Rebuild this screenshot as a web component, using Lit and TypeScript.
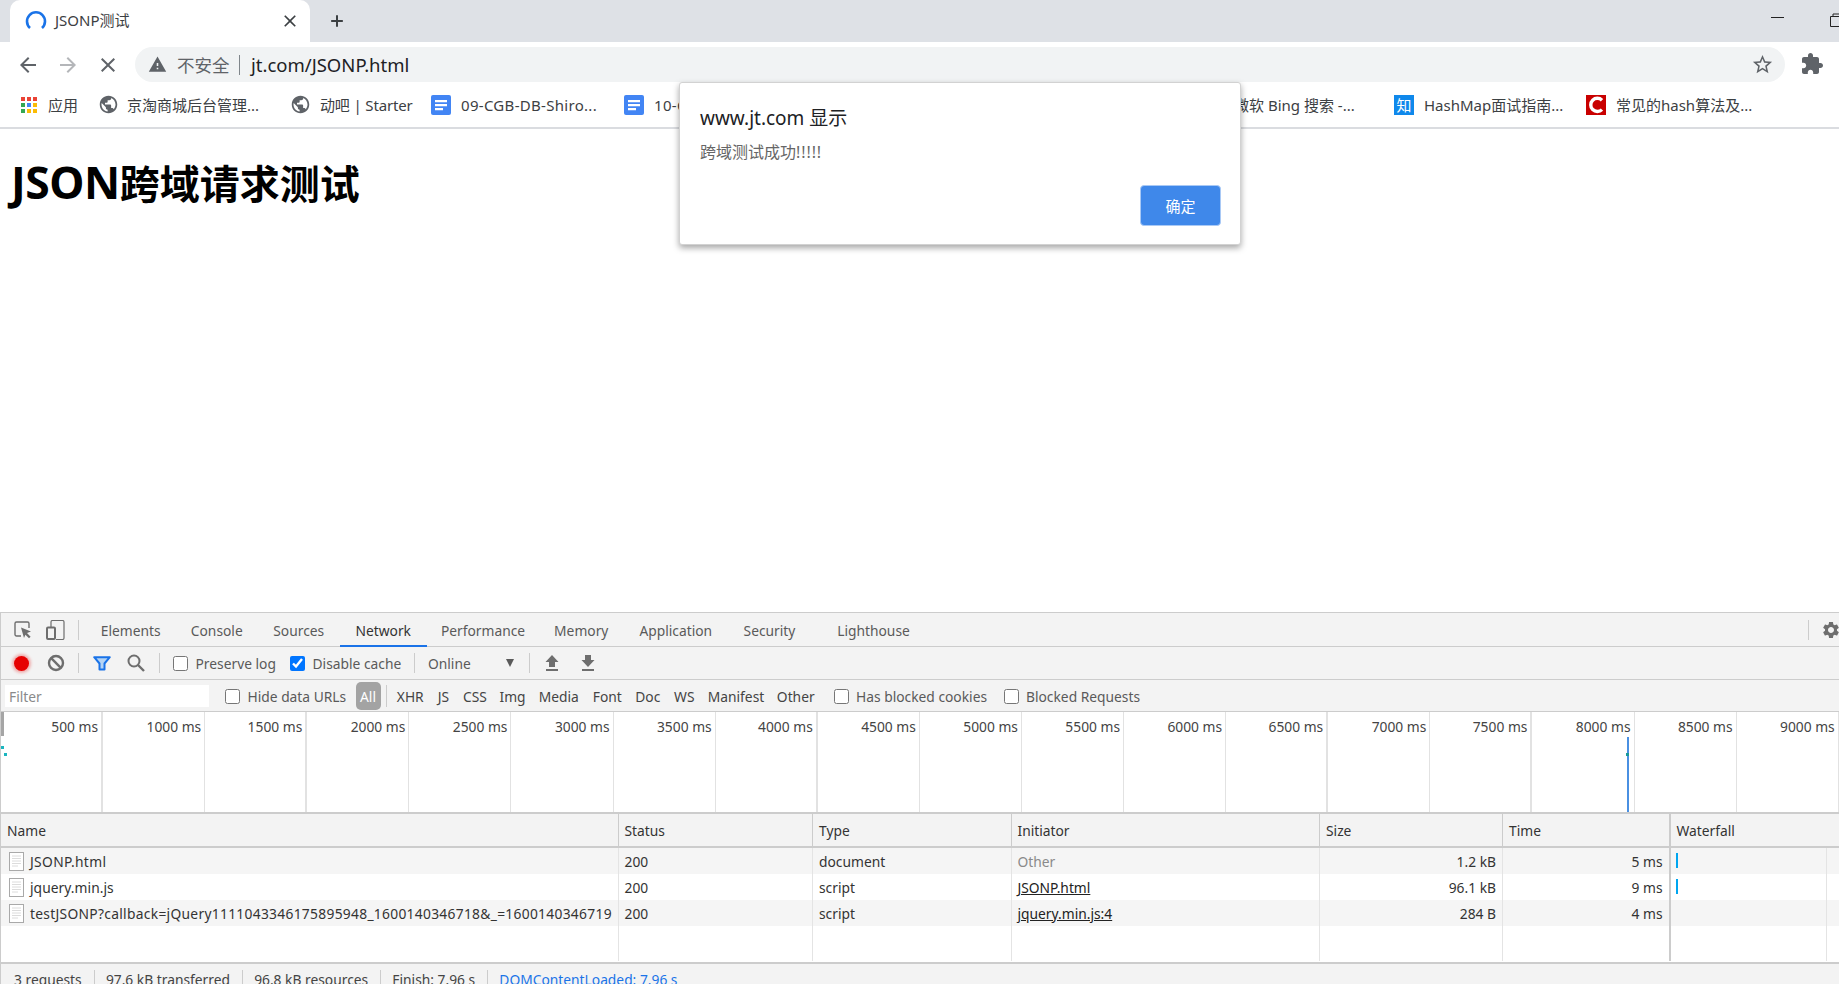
import { LitElement, html, css, svg } from "lit";
import { customElement } from "lit/decorators.js";

const ic = (d: string, cls = "") => html`<svg class="ic ${cls}" viewBox="0 0 24 24"><path d="${d}"></path></svg>`;
const P = {
  back: "M20 11H7.83l5.59-5.59L12 4l-8 8 8 8 1.41-1.41L7.83 13H20v-2z",
  fwd: "M12 4l-1.41 1.41L16.17 11H4v2h12.17l-5.58 5.59L12 20l8-8z",
  close: "M19 6.41L17.59 5 12 10.59 6.41 5 5 6.41 10.59 12 5 17.59 6.41 19 12 13.41 17.59 19 19 17.59 13.41 12z",
  warn: "M1 21h22L12 2 1 21zm12-3h-2v-2h2v2zm0-4h-2v-4h2v4z",
  star: "M22 9.24l-7.19-.62L12 2 9.19 8.63 2 9.24l5.46 4.73L5.82 21 12 17.27 18.18 21l-1.63-7.03L22 9.24zM12 15.4l-3.76 2.27 1-4.28-3.32-2.88 4.38-.38L12 6.1l1.71 4.04 4.38.38-3.32 2.88 1 4.28L12 15.4z",
  ext: "M20.5 11H19V7c0-1.1-.9-2-2-2h-4V3.5C13 2.12 11.88 1 10.5 1S8 2.12 8 3.5V5H4c-1.1 0-1.99.9-1.99 2v3.8H3.5c1.49 0 2.7 1.21 2.7 2.7s-1.21 2.7-2.7 2.7H2V20c0 1.1.9 2 2 2h3.8v-1.5c0-1.49 1.21-2.7 2.7-2.7 1.49 0 2.7 1.21 2.7 2.7V22H17c1.1 0 2-.9 2-2v-4h1.5c1.38 0 2.5-1.12 2.5-2.5S21.88 11 20.5 11z",
  globe: "M12 2C6.48 2 2 6.48 2 12s4.48 10 10 10 10-4.48 10-10S17.52 2 12 2zm-1 17.93c-3.95-.49-7-3.85-7-7.93 0-.62.08-1.21.21-1.79L9 15v1c0 1.1.9 2 2 2v1.93zm6.9-2.54c-.26-.81-1-1.39-1.9-1.39h-1v-3c0-.55-.45-1-1-1H8v-2h2c.55 0 1-.45 1-1V7h2c1.1 0 2-.9 2-2v-.41c2.93 1.19 5 4.06 5 7.41 0 2.08-.8 3.97-2.1 5.39z",
  gear: "M19.14 12.94c.04-.3.06-.61.06-.94 0-.32-.02-.64-.07-.94l2.03-1.58c.18-.14.23-.41.12-.61l-1.92-3.32c-.12-.22-.37-.29-.59-.22l-2.39.96c-.5-.38-1.03-.7-1.62-.94l-.36-2.54c-.04-.24-.24-.41-.48-.41h-3.84c-.24 0-.43.17-.47.41l-.36 2.54c-.59.24-1.13.57-1.62.94l-2.39-.96c-.22-.08-.47 0-.59.22L2.74 8.87c-.12.21-.08.47.12.61l2.03 1.58c-.05.3-.09.63-.09.94s.02.64.07.94l-2.03 1.58c-.18.14-.23.41-.12.61l1.92 3.32c.12.22.37.29.59.22l2.39-.96c.5.38 1.03.7 1.62.94l.36 2.54c.05.24.24.41.48.41h3.84c.24 0 .44-.17.47-.41l.36-2.54c.59-.24 1.13-.56 1.62-.94l2.39.96c.22.08.47 0 .59-.22l1.92-3.32c.12-.22.07-.47-.12-.61l-2.01-1.58zM12 15.6c-1.98 0-3.6-1.62-3.6-3.6s1.62-3.6 3.6-3.6 3.6 1.62 3.6 3.6-1.62 3.6-3.6 3.6z",
};

const appsColors = ["#ea4335", "#ea4335", "#ea4335", "#34a853", "#4285f4", "#fbbc05", "#34a853", "#fbbc05", "#fbbc05"];
const appsIcon = html`<svg class="apps" viewBox="0 0 16 16">
  ${appsColors.map((c, i) => svg`<rect x="${(i % 3) * 6}" y="${Math.floor(i / 3) * 6}" width="4" height="4" fill="${c}"></rect>`)}
</svg>`;
const docIcon = html`<svg class="bm-svg" viewBox="0 0 20 20"><rect x="0" y="0" width="20" height="20" rx="2" fill="#4285f4"></rect><path d="M4 5h12v2.2H4zM4 9h12v2.2H4zM4 13h8v2.2H4z" fill="#fff"></path></svg>`;
const zhihuIcon = html`<div class="zhihu">知</div>`;
const cIcon = html`<svg class="bm-svg" viewBox="0 0 20 20"><rect width="20" height="20" fill="#c90000"></rect><path d="M16 5.2A6.6 6.6 0 1 0 16 14.6" fill="none" stroke="#fff" stroke-width="3.4"></path></svg>`;

const bookmarks = [
  { w: 79, after: 0, gap: 11, ls: 0, icon: appsIcon, text: "应用" },
  { w: 192, after: 0, gap: 8, ls: 0, icon: ic(P.globe, "globe"), text: "京淘商城后台管理..." },
  { w: 140, after: 0, gap: 9, ls: -0.15, icon: ic(P.globe, "globe"), text: "动吧 | Starter" },
  { w: 193, after: 0, gap: 10, ls: 0.3, icon: docIcon, text: "09-CGB-DB-Shiro..." },
  { w: 56, after: 524, gap: 10, ls: 0.3, icon: docIcon, text: "10-CGB-DB-Redis..." },
  { w: 190, after: 0, gap: 10, ls: 0, icon: ic(P.globe, "globe"), text: "微软 Bing 搜索 -..." },
  { w: 192, after: 0, gap: 10, ls: 0, icon: zhihuIcon, text: "HashMap面试指南..." },
  { w: 200, after: 0, gap: 10, ls: 0, icon: cIcon, text: "常见的hash算法及..." },
];

const tabs = [
  ["Elements", 89.5], ["Console", 82.5], ["Sources", 81.5], ["Network", 87.5], ["Performance", 112],
  ["Memory", 84.5], ["Application", 104.5], ["Security", 83], ["Lighthouse", 125],
] as [string, number][];

const types = [
  ["XHR", 40.5], ["JS", 26], ["CSS", 37], ["Img", 38], ["Media", 54.5], ["Font", 42.5],
  ["Doc", 38.5], ["WS", 34.5], ["Manifest", 69], ["Other", 50.5],
] as [string, number][];

const ticks = Array.from({ length: 18 }, (_, i) => (i + 1) * 500);
const wideTicks = new Set([500, 1500, 4000, 6500, 7500]);

const cols = ["Status", "Type", "Initiator", "Size", "Time"];
const rows = [
  { name: "JSONP.html", ls: 0.35, type: "document", init: "Other", size: "1.2 kB", time: "5 ms", bar: true },
  { name: "jquery.min.js", ls: 0.05, type: "script", init: "JSONP.html", link: true, size: "96.1 kB", time: "9 ms", bar: true },
  { name: "testJSONP?callback=jQuery1111043346175895948_1600140346718&_=1600140346719", ls: 0.3, type: "script", init: "jquery.min.js:4", link: true, size: "284 B", time: "4 ms", bar: false },
] as any[];

const fileIcon = html`<svg class="file" viewBox="0 0 15 19"><rect x=".5" y=".5" width="14" height="18" fill="#fff" stroke="#a9a9a9"></rect><path d="M3 4h9M3 6.5h9M3 9h9M3 11.5h9M3 14h6" stroke="#dcdcdc" fill="none"></path></svg>`;

@customElement("app-root")
export class AppRoot extends LitElement {
  static styles = css`
    :host { display: block; position: relative; width: 1839px; height: 984px; overflow: hidden; background: #fff;
      font-family: "Noto Sans", "Noto Sans CJK SC", sans-serif; color: #333; }
    .ic { width: 24px; height: 24px; fill: #5f6368; display: block; flex: none; }

    .strip { height: 42px; background: #dee1e6; display: flex; align-items: center; padding-left: 10px; box-sizing: border-box; position: relative; }
    .tab { width: 300px; height: 42px; background: #fff; border-radius: 10px 10px 0 0; box-sizing: border-box; display: flex; align-items: center; padding-left: 15px; flex: none; }
    .spin { width: 22px; height: 22px; flex: none; }
    .tab-title { font-size: 15px; line-height: 20px; color: #3c4043; margin: -2px 0 0 8px; width: 225px; white-space: nowrap; }
    .tab .ic { width: 20px; height: 20px; fill: #3c4043; }
    .plus { margin-left: 17px; width: 20px; height: 20px; fill: #3c4043; flex: none; }
    .winbtns { margin-left: auto; display: flex; align-items: flex-start; align-self: flex-start; padding-top: 13px; }
    .min { width: 13px; height: 1px; background: #222; margin: 4px 0 0 0; }
    .restore { width: 14px; height: 14px; margin-left: 46px; flex: none; margin-right: -5px; }

    .toolbar { height: 40px; display: flex; align-items: flex-start; padding: 5px 0 0 8px; box-sizing: border-box; }
    .nav { height: 35px; display: flex; align-items: center; justify-content: center; flex: none; }
    .nav .ic { fill: #5f6368; width: 24px; height: 24px; }
    .nav .fwd { fill: #b4b6b9; }
    .n40 { width: 40px; } .n39 { width: 39px; } .n41 { width: 41px; }
    .omni { margin-left: 7px; width: 1650px; height: 35px; border-radius: 18px; background: #f1f3f4; display: flex; align-items: center; padding-left: 13px; box-sizing: border-box; flex: none; }
    .omni .warn { width: 19px; height: 19px; fill: #5f6368; }
    .insecure { font-size: 17.5px; color: #5f6368; margin-left: 10px; }
    .pipe { width: 1.5px; height: 20px; background: #80868b; margin: 0 11px 0 9px; }
    .url { font-size: 18.5px; color: #202124; flex: 1; white-space: nowrap; }
    .omni .star { width: 23px; height: 23px; margin-right: 11px; }
    .ext { margin-left: 15px; width: 24px; height: 24px; margin-top: 5px; }

    .bars { height: 47px; border-bottom: 2px solid #dadce0; box-sizing: border-box; display: flex; align-items: center; padding-left: 20px; }
    .bm { display: flex; align-items: center; flex: none; overflow: hidden; white-space: nowrap; font-size: 15px; color: #3c4043; }
    .apps { width: 16px; height: 16px; flex: none; margin-left: 1px; }
    .bm-svg { width: 20px; height: 20px; flex: none; }
    .globe { width: 21px; height: 21px; margin-left: -1px; }
    .zhihu { width: 20px; height: 20px; flex: none; background: #0f88eb; color: #fff; font-size: 15px; line-height: 20px; text-align: center; }

    .page { height: 483px; box-sizing: border-box; padding: 28px 0 0 11px; }
    h1 { margin: 0; font-size: 40px; line-height: 50px; font-weight: 700; color: #000; }
    .latin { font-size: 44.5px; letter-spacing: -0.5px; line-height: 50px; }

    .dialog { position: absolute; left: 679px; top: 82px; width: 562px; height: 163px; box-sizing: border-box; background: #fff; border-radius: 3px; border: 1px solid #d2d2d2; box-shadow: 0 3px 6px rgba(0,0,0,.35); padding: 22px 19px 18px 20px; display: flex; flex-direction: column; }
    .d-title { font-size: 19px; line-height: 26px; color: #202124; }
    .d-msg { font-size: 16px; line-height: 20px; color: #666; margin-top: 11px; }
    .bang { letter-spacing: 0.9px; }
    .d-btn { margin-top: auto; align-self: flex-end; width: 81px; height: 41px; background: #3f88ea; color: #fff; border-radius: 4px; border: 1px solid #a9c9f5; box-sizing: border-box; font-size: 15px; display: flex; align-items: center; justify-content: center; }

    .devtools { height: 372px; box-sizing: border-box; border-top: 1px solid #ccc; border-left: 1px solid #ccc; font-size: 13.8px; background: #f3f3f3; position: relative; overflow: hidden; }
    .dt-tabs { height: 34px; display: flex; border-bottom: 1px solid #ccc; box-sizing: border-box; }
    .dt-icon { flex: none; display: flex; align-items: center; justify-content: center; }
    .i1 { width: 43px; } .i2 { width: 22px; }
    .dt-sep { flex: none; width: 1px; height: 20px; background: #ccc; align-self: center; }
    .tabs-sep { margin: 0 7px 0 12px; }
    .tabcell { flex: none; display: flex; align-items: center; justify-content: center; box-sizing: border-box; color: #5a5a5a; white-space: nowrap; height: 34px; }
    .tabcell.on { color: #333; border-bottom: 2px solid #1a73e8; padding-top: 2px; }
    .settings { margin-left: auto; display: flex; align-items: center; }
    .settings .ic { fill: #6e6e6e; width: 20px; height: 20px; margin: 0 -2px 0 12px; }

    .tb2 { height: 33px; border-bottom: 1px solid #ccc; box-sizing: border-box; display: grid; align-items: center; justify-items: center;
      grid-template-columns: 3px 34px 36px 8px 39px 30px 16px 6px 117px 120px 8px 10px 94px 14px 32px 40px; }
    .tb2 > label { justify-self: start; }
    .rec { width: 15px; height: 15px; border-radius: 50%; background: #e60000; box-shadow: 0 0 3px 2px rgba(230,0,0,.3); }
    .filter-ic { width: 18px; height: 15px; }
    label { display: flex; align-items: center; gap: 7.5px; color: #5a5a5a; white-space: nowrap; }
    input[type="checkbox"] { width: 15px; height: 15px; margin: 0; accent-color: #0075ff; flex: none; }
    .select { width: 100%; display: flex; justify-content: space-between; align-items: center; color: #5a5a5a; padding-right: 8px; box-sizing: border-box; }
    .tri { width: 0; height: 0; border-left: 4px solid transparent; border-right: 4px solid transparent; border-top: 8px solid #5a5a5a; }

    .tb3 { height: 32px; box-sizing: border-box; border-bottom: 1px solid #ccc; display: flex; align-items: center; padding: 1px 0 0 4px; }
    .filter { width: 204px; height: 22px; background: #fff; color: #8a8a8a; padding-left: 4px; box-sizing: border-box; display: flex; align-items: center; flex: none; margin-right: 16px; }
    .tb3 label { flex: none; }
    .hide { width: 130.5px; }
    .all { width: 25px; height: 28px; flex: none; background: #a3a3a3; color: #fff; border-radius: 5px; display: flex; align-items: center; justify-content: center; }
    .tb3 .dt-sep { margin: 0 3.5px 0 5px; height: 22px; }
    .type { flex: none; text-align: center; color: #444; white-space: nowrap; }
    .hbc { margin-left: 12.5px; width: 170px; }

    .overview { height: 100px; background: #fff; display: flex; position: relative; }
    .tick { flex: none; width: 102.1px; box-sizing: border-box; border-right: 1px solid #e2e2e2; text-align: right; padding: 5px 3px 0 0; line-height: 20px; color: #444; white-space: nowrap; }
    .tick.wide { border-right: 2px solid #e2e2e2; }
    .thumb { position: absolute; left: 0; top: 0; width: 3px; height: 24px; background: #a5a5a5; }
    .dot { position: absolute; width: 3px; height: 3px; background: #1ab5bf; }
    .d1 { left: 0; top: 34px; } .d2 { left: 3px; top: 41px; }
    .line { position: absolute; left: 1625.5px; top: 25px; bottom: 0; width: 2px; background: #4a90e2; }
    .d3 { left: 1625px; top: 41px; background: #1a9a9a; }

    .r { display: grid; grid-template-columns: 617.5px 194.5px 198.5px 308.5px 183px 167.5px 156px 1fr; }
    .head { border-top: 2px solid #ccc; border-bottom: 2px solid #ccc; height: 32px; color: #333; }
    .head > div { display: flex; align-items: center; padding-left: 6px; box-sizing: border-box; border-right: 1px solid #ccc; white-space: nowrap; }
    .head > div.wf { grid-column: span 2; border-right: none; }
    .head > div.wide-b { border-right: 2px solid #ccc; }
    .row { height: 26px; background: #fff; color: #333; }
    .row.odd { background: #f5f5f5; }
    .row > div { display: flex; align-items: center; padding: 0 6px; box-sizing: border-box; border-right: 1px solid #e4e4e4; white-space: nowrap; overflow: hidden; position: relative; }
    .row > div.num { justify-content: flex-end; }
    .row > div.wb { border-right: 2px solid #ccc; }
    .row > div.last { border-right: none; }
    .row > div.nm { padding-left: 8px; gap: 6px; }
    .file { width: 15px; height: 19px; flex: none; }
    .muted { color: #8a8a8a; }
    .link { text-decoration: underline; color: #222; }
    .bar { position: absolute; left: 5px; top: 5px; width: 2.5px; height: 15px; background: #00a6f0; }
    .blank { height: 36px; background: #fff; }
    .blank > div { border-right: 1px solid #e4e4e4; box-sizing: border-box; margin-bottom: 1px; }
    .blank > div.wb { border-right: 2px solid #ccc; }
    .blank > div.last { border-right: none; }
    .foot { border-top: 2px solid #ccc; height: 30px; display: flex; }
    .foot > div { padding: 0 11.9px 0 11.3px; border-right: 1px solid #ccc; height: 16px; margin-top: 6px; line-height: 20px; white-space: nowrap; flex: none; color: #444; }
    .foot > div:first-child { padding-left: 13px; }
    .foot > div:last-child { border-right: none; color: #1a73e8; }
  `;

  render() {
    return html`
      <div class="strip">
        <div class="tab">
          <svg class="spin" viewBox="0 0 22 22"><path d="M5 18A9 9 0 1 1 17 18" fill="none" stroke="#1a73e8" stroke-width="2.6"></path></svg>
          <div class="tab-title">JSONP测试</div>
          ${ic(P.close)}
        </div>
        <svg class="plus" viewBox="0 0 24 24"><path d="M19 13.2h-5.8V19h-2.4v-5.8H5v-2.4h5.8V5h2.4v5.8H19z"></path></svg>
        <div class="winbtns">
          <div class="min"></div>
          <svg class="restore" viewBox="0 0 14 14"><path d="M3 3V1h10v9h-2M.5 3.5h10v10H.5z" fill="none" stroke="#222"></path></svg>
        </div>
      </div>
      <div class="toolbar">
        <div class="nav n40">${ic(P.back)}</div>
        <div class="nav n39">${ic(P.fwd, "fwd")}</div>
        <div class="nav n41">${ic(P.close)}</div>
        <div class="omni">
          ${ic(P.warn, "warn")}
          <span class="insecure">不安全</span><span class="pipe"></span>
          <span class="url">jt.com/JSONP.html</span>
          ${ic(P.star, "star")}
        </div>
        ${ic(P.ext, "ext")}
      </div>
      <div class="bars">
        ${bookmarks.map((b) => html`<div class="bm" style="width:${b.w}px;gap:${b.gap}px;margin-right:${b.after}px;letter-spacing:${b.ls}px">${b.icon}<span>${b.text}</span></div>`)}
      </div>
      <div class="page"><h1><span class="latin">JSON</span>跨域请求测试</h1></div>

      <div class="devtools">
        <div class="dt-tabs">
          <div class="dt-icon i1">
            <svg width="18" height="18" viewBox="0 0 18 18"><path d="M7 15H2.5A1.5 1.5 0 0 1 1 13.5v-11A1.5 1.5 0 0 1 2.5 1h11A1.5 1.5 0 0 1 15 2.5V7" fill="none" stroke="#6e6e6e" stroke-width="1.4"></path><path d="M7 6.5l10 4-4 1.6 3.6 3.6-1.6 1.6-3.6-3.6L10 17z" fill="#6e6e6e"></path></svg>
          </div>
          <div class="dt-icon i2">
            <svg width="19" height="20" viewBox="0 0 19 20"><path d="M5 7V2a1.5 1.5 0 0 1 1.5-1.5h10A1.5 1.5 0 0 1 18 2v16a1.5 1.5 0 0 1-1.5 1.5H10" fill="none" stroke="#6e6e6e" stroke-width="1.2"></path><rect x="1" y="7.5" width="8" height="11.5" rx="1" fill="none" stroke="#6e6e6e" stroke-width="2"></rect></svg>
          </div>
          <div class="dt-sep tabs-sep"></div>
          ${tabs.map(([t, w]) => html`<div class="tabcell ${t === "Network" ? "on" : ""}" style="width:${w}px">${t}</div>`)}
          <div class="settings"><div class="dt-sep"></div>${ic(P.gear)}</div>
        </div>
        <div class="tb2">
          <div></div>
          <div class="rec"></div>
          <svg width="18" height="18" viewBox="0 0 18 18"><circle cx="9" cy="9" r="7" fill="none" stroke="#6e6e6e" stroke-width="2.4"></circle><path d="M4.2 4.2l9.6 9.6" stroke="#6e6e6e" stroke-width="2.4"></path></svg>
          <div class="dt-sep"></div>
          <svg class="filter-ic" viewBox="0 0 18 15"><path d="M1.2 1.2h15.6L11.5 7.5v6h-5v-6z" fill="#b5d4f5" stroke="#1a73e8" stroke-width="2" stroke-linejoin="round"></path></svg>
          <svg width="20" height="20" viewBox="0 0 20 20"><circle cx="8" cy="8" r="5.5" fill="none" stroke="#6e6e6e" stroke-width="2"></circle><path d="M12 12l6 6" stroke="#6e6e6e" stroke-width="2.4"></path></svg>
          <div class="dt-sep"></div>
          <div></div>
          <label><input type="checkbox" />Preserve log</label>
          <label><input type="checkbox" checked />Disable cache</label>
          <div class="dt-sep"></div>
          <div></div>
          <div class="select"><span>Online</span><span class="tri"></span></div>
          <div class="dt-sep"></div>
          <svg width="14" height="16" viewBox="0 0 14 16"><path d="M7 0l6.5 7H10v5H4V7H.5zM1 14h12v2H1z" fill="#6e6e6e"></path></svg>
          <svg width="14" height="16" viewBox="0 0 14 16"><path d="M7 12L.5 5H4V0h6v5h3.5zM1 14h12v2H1z" fill="#6e6e6e"></path></svg>
        </div>
        <div class="tb3">
          <div class="filter">Filter</div>
          <label class="hide"><input type="checkbox" />Hide data URLs</label>
          <div class="all">All</div>
          <div class="dt-sep"></div>
          ${types.map(([t, w]) => html`<div class="type" style="width:${w}px">${t}</div>`)}
          <label class="hbc"><input type="checkbox" />Has blocked cookies</label>
          <label><input type="checkbox" />Blocked Requests</label>
        </div>
        <div class="overview">
          ${ticks.map((t) => html`<div class="tick ${wideTicks.has(t) ? "wide" : ""}">${t} ms</div>`)}
          <div class="thumb"></div>
          <div class="dot d1"></div><div class="dot d2"></div>
          <div class="line"></div><div class="dot d3"></div>
        </div>
        <div class="r head">
          <div>Name</div>
          ${cols.map((c) => html`<div class="${c === "Time" ? "wide-b" : ""}">${c}</div>`)}
          <div class="wf">Waterfall</div>
        </div>
        ${rows.map((r, i) => html`
          <div class="r row ${i % 2 === 0 ? "odd" : ""}">
            <div class="nm">${fileIcon}<span style="letter-spacing:${r.ls}px">${r.name}</span></div>
            <div>200</div>
            <div>${r.type}</div>
            <div><span class="${r.link ? "link" : "muted"}">${r.init}</span></div>
            <div class="num">${r.size}</div>
            <div class="num wb">${r.time}</div>
            <div>${r.bar ? html`<span class="bar"></span>` : ""}</div>
            <div class="last"></div>
          </div>`)}
        <div class="r blank">
          <div></div><div></div><div></div><div></div><div></div><div class="wb"></div><div></div><div class="last"></div>
        </div>
        <div class="foot">
          <div>3 requests</div><div>97.6 kB transferred</div><div>96.8 kB resources</div><div>Finish: 7.96 s</div><div>DOMContentLoaded: 7.96 s</div>
        </div>
      </div>

      <div class="dialog">
        <div class="d-title">www.jt.com 显示</div>
        <div class="d-msg">跨域测试成功<span class="bang">!!!!!</span></div>
        <div class="d-btn">确定</div>
      </div>
    `;
  }
}
